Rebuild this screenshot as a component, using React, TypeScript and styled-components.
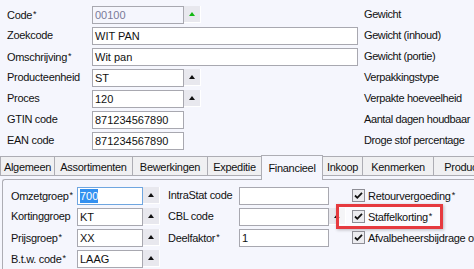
import { FC } from 'react'
import styled, { createGlobalStyle } from 'styled-components'

const GlobalStyle = createGlobalStyle`
  html, body {
    margin: 0;
    padding: 0;
    background: #f5f6fd;
  }
  body {
    font-family: 'Liberation Sans', Arial, sans-serif;
    font-size: 11px;
    color: #111;
  }
`

type Row = { label: string; req?: boolean; value?: string; width: number; button?: 'green' | 'black'; disabled?: boolean; right: string }

const topRows: Row[] = [
  { label: 'Code', req: true, value: '00100', width: 92, button: 'green', disabled: true, right: 'Gewicht' },
  { label: 'Zoekcode', value: 'WIT PAN', width: 266, right: 'Gewicht (inhoud)' },
  { label: 'Omschrijving', req: true, value: 'Wit pan', width: 266, right: 'Gewicht (portie)' },
  { label: 'Producteenheid', value: 'ST', width: 92, button: 'black', right: 'Verpakkingstype' },
  { label: 'Proces', value: '120', width: 92, button: 'black', right: 'Verpakte hoeveelheid' },
  { label: 'GTIN code', value: '871234567890', width: 92, right: 'Aantal dagen houdbaar' },
  { label: 'EAN code', value: '871234567890', width: 92, right: 'Droge stof percentage' },
]

const tabs = [
  { name: 'Algemeen', w: 55 },
  { name: 'Assortimenten', w: 79 },
  { name: 'Bewerkingen', w: 76 },
  { name: 'Expeditie', w: 55 },
  { name: 'Financieel', w: 62, active: true },
  { name: 'Inkoop', w: 41 },
  { name: 'Kenmerken', w: 72 },
  { name: 'Producten', w: 70 },
]

const App: FC = () => {
  return (
    <Page>
      <GlobalStyle />
      <Form>
        {topRows.map((r) => (
          <FormRow key={r.label}>
            <Label>
              {r.label}
              {r.req && <Req>*</Req>}
            </Label>
            <FieldCell>
              <Input $w={r.width} $disabled={r.disabled}>
                {r.value}
              </Input>
              {r.button && (
                <DropButton>
                  <Arrow $color={r.button === 'green' ? '#12b812' : '#111'} />
                </DropButton>
              )}
            </FieldCell>
            <Label $tight>{r.right}</Label>
          </FormRow>
        ))}
      </Form>

      <TabStrip>
        {tabs.map((t) => (
          <Tab key={t.name} $w={t.w} $active={t.active}>
            {t.name}
          </Tab>
        ))}
      </TabStrip>

      <Panel>
        <Label>
          Omzetgroep<Req>*</Req>
        </Label>
        <FieldCell>
          <Input $w={66} $focused>
            <Selected>700</Selected>
          </Input>
          <DropButton>
            <Arrow $color="#111" />
          </DropButton>
        </FieldCell>
        <Label>IntraStat code</Label>
        <FieldCell>
          <Input $w={90} />
        </FieldCell>
        <CheckCell>
          <CheckBox />
          <span>
            Retourvergoeding<Req>*</Req>
          </span>
        </CheckCell>

        <Label>Kortinggroep</Label>
        <FieldCell>
          <Input $w={66}>KT</Input>
          <DropButton>
            <Arrow $color="#111" />
          </DropButton>
        </FieldCell>
        <Label>CBL code</Label>
        <FieldCell>
          <Input $w={90} />
          <DropButton>
            <Arrow $color="#111" />
          </DropButton>
        </FieldCell>
        <CheckCell>
          <Highlight />
          <CheckBox />
          <CheckText>
            Staffelkorting<Req>*</Req>
          </CheckText>
        </CheckCell>

        <Label>
          Prijsgroep<Req>*</Req>
        </Label>
        <FieldCell>
          <Input $w={66}>XX</Input>
          <DropButton>
            <Arrow $color="#111" />
          </DropButton>
        </FieldCell>
        <Label>
          Deelfaktor<Req>*</Req>
        </Label>
        <FieldCell>
          <Input $w={90}>1</Input>
        </FieldCell>
        <CheckCell>
          <CheckBox />
          <span>Afvalbeheersbijdrage over inkoop</span>
        </CheckCell>

        <Label>
          B.t.w. code<Req>*</Req>
        </Label>
        <FieldCell>
          <Input $w={66}>LAAG</Input>
          <DropButton>
            <Arrow $color="#111" />
          </DropButton>
        </FieldCell>
      </Panel>
    </Page>
  )
}

const CheckBox: FC = () => (
  <Box>
    <svg width="11" height="11" viewBox="0 0 11 11">
      <path d="M2 5.5 L4.3 7.8 L9 2.8" fill="none" stroke="#111" strokeWidth="1.8" />
    </svg>
  </Box>
)

const Page = styled.div`
  width: 474px;
  height: 269px;
  overflow: hidden;
  background: #f5f6fd;
`

const Form = styled.div`
  display: grid;
  grid-template-columns: 79px 266px auto;
  grid-auto-rows: 21px;
  column-gap: 6px;
  padding: 4px 0 0 7px;
`

const FormRow = styled.div`
  display: contents;
`

const Label = styled.div<{ $tight?: boolean }>`
  line-height: 21px;
  white-space: nowrap;
  letter-spacing: ${(p) => (p.$tight ? -0.4 : -0.3)}px;
  color: #111;
`

const Req = styled.span`
  font-size: 9px;
  vertical-align: 2px;
  margin-left: 1px;
`

const FieldCell = styled.div`
  display: flex;
  align-items: center;
`

const Input = styled.div<{ $w: number; $disabled?: boolean; $focused?: boolean }>`
  box-sizing: border-box;
  width: ${(p) => p.$w}px;
  height: 18px;
  border: 1px solid ${(p) => (p.$focused ? '#6fa6e0' : '#a8a8b0')};
  background: ${(p) => (p.$disabled ? '#f5f6fd' : '#fff')};
  color: ${(p) => (p.$disabled ? '#7a7a98' : '#111')};
  padding: 0 2px;
  line-height: 16px;
  white-space: nowrap;
  overflow: hidden;
`

const Selected = styled.span`
  background: #3390f0;
  color: #fff;
  padding: 1px 0;
`

const DropButton = styled.div`
  box-sizing: border-box;
  width: 17px;
  height: 17px;
  background: #e8e8ee;
  border-right: 1px solid #fff;
  border-bottom: 1px solid #fff;
  display: flex;
  align-items: center;
  justify-content: center;
`

const Arrow = styled.div<{ $color: string }>`
  width: 0;
  height: 0;
  border-left: 3px solid transparent;
  border-right: 3px solid transparent;
  border-bottom: 4px solid ${(p) => p.$color};
`

const TabStrip = styled.div`
  display: flex;
  align-items: flex-end;
  height: 24px;
  margin-top: 4px;
  position: relative;
  z-index: 1;
`

const Tab = styled.div<{ $w: number; $active?: boolean }>`
  box-sizing: border-box;
  flex: none;
  width: ${(p) => p.$w}px;
  height: ${(p) => (p.$active ? 25 : 20)}px;
  margin-bottom: ${(p) => (p.$active ? -1 : 3)}px;
  margin-right: -1px;
  border: 1px solid #adadb4;
  border-bottom: ${(p) => (p.$active ? 'none' : '1px solid #adadb4')};
  background: ${(p) => (p.$active ? '#f5f6fd' : '#f0f0f2')};
  display: flex;
  align-items: center;
  justify-content: center;
  letter-spacing: -0.3px;
  white-space: nowrap;
  overflow: hidden;
  padding-top: ${(p) => (p.$active ? 0 : 1)}px;
`

const Panel = styled.div`
  margin-left: 2px;
  border-top: 1px solid #adadb4;
  border-left: 1px solid #adadb4;
  border-top-left-radius: 3px;
  height: 100px;
  padding: 5px 0 0 8px;
  display: grid;
  grid-template-columns: 66px 91px 71px 113px 1fr;
  grid-auto-rows: 21px;
`

const CheckCell = styled.div`
  display: flex;
  align-items: center;
  gap: 3px;
  white-space: nowrap;
  letter-spacing: -0.3px;
  position: relative;
`

const CheckText = styled.span`
  position: relative;
  z-index: 2;
`

const Box = styled.div`
  box-sizing: border-box;
  width: 13px;
  height: 13px;
  border: 1px solid #8e8e96;
  background: #ececf0;
  display: flex;
  align-items: center;
  justify-content: center;
  position: relative;
  z-index: 2;
  flex: none;
`

const Highlight = styled.div`
  position: absolute;
  left: -16px;
  top: -2px;
  width: 107px;
  height: 25px;
  box-sizing: border-box;
  border: 3px solid #e63a3f;
  background: rgba(255, 255, 255, 0.55);
  box-shadow: 1px 1px 3px rgba(0, 0, 0, 0.25);
  z-index: 1;
  pointer-events: none;
`

export default App
